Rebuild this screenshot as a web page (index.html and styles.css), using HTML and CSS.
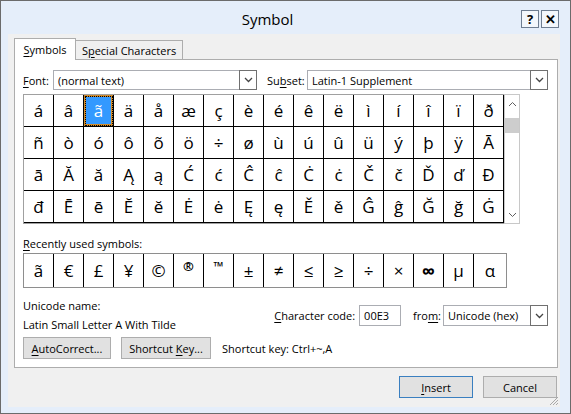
FILE: index.html
```html
<!DOCTYPE html>
<html lang="en">
<head>
    <meta charset="UTF-8">
    <meta name="viewport" content="width=device-width, initial-scale=1.0">
    <title>Symbol</title>
    <link rel="stylesheet" href="styles.css">
</head>
<body>
    <div class="window">
        <div class="titlebar">
            <div class="title">Symbol</div>
            <div class="caption-btns">
                <span class="cap-btn">?</span>
                <span class="cap-btn">&#x2715;</span>
            </div>
        </div>

        <div class="client">
            <!-- Tabs -->
            <div class="tabs">
                <div class="tab active"><u>S</u>ymbols</div>
                <div class="tab special">S<u>p</u>ecial Characters</div>
            </div>

            <div class="panel">
                <div class="font-row">
                    <span class="font-label"><u>F</u>ont:</span>
                    <div class="combo font-combo">
                        <span>(normal text)</span>
                        <span class="drop"><svg width="9" height="6" viewBox="0 0 9 6"><path d="M1 1 L4.5 4.5 L8 1" fill="none" stroke="#444" stroke-width="1.3"/></svg></span>
                    </div>
                    <span class="subset-label">Su<u>b</u>set:</span>
                    <div class="combo subset-combo">
                        <span>Latin-1 Supplement</span>
                        <span class="drop"><svg width="9" height="6" viewBox="0 0 9 6"><path d="M1 1 L4.5 4.5 L8 1" fill="none" stroke="#444" stroke-width="1.3"/></svg></span>
                    </div>
                </div>

                <!-- Character map -->
                <div class="charmap">
                    <div class="grid">
                        <span class="cell">á</span><span class="cell">â</span><span class="cell sel">ã</span><span class="cell">ä</span>
                        <span class="cell">å</span><span class="cell">æ</span><span class="cell">ç</span><span class="cell">è</span>
                        <span class="cell">é</span><span class="cell">ê</span><span class="cell">ë</span><span class="cell">ì</span>
                        <span class="cell">í</span><span class="cell">î</span><span class="cell">ï</span><span class="cell">ð</span>

                        <span class="cell">ñ</span><span class="cell">ò</span><span class="cell">ó</span><span class="cell">ô</span>
                        <span class="cell">õ</span><span class="cell">ö</span><span class="cell">÷</span><span class="cell">ø</span>
                        <span class="cell">ù</span><span class="cell">ú</span><span class="cell">û</span><span class="cell">ü</span>
                        <span class="cell">ý</span><span class="cell">þ</span><span class="cell">ÿ</span><span class="cell">Ā</span>

                        <span class="cell">ā</span><span class="cell">Ă</span><span class="cell">ă</span><span class="cell">Ą</span>
                        <span class="cell">ą</span><span class="cell">Ć</span><span class="cell">ć</span><span class="cell">Ĉ</span>
                        <span class="cell">ĉ</span><span class="cell">Ċ</span><span class="cell">ċ</span><span class="cell">Č</span>
                        <span class="cell">č</span><span class="cell">Ď</span><span class="cell">ď</span><span class="cell">Đ</span>

                        <span class="cell">đ</span><span class="cell">Ē</span><span class="cell">ē</span><span class="cell">Ĕ</span>
                        <span class="cell">ĕ</span><span class="cell">Ė</span><span class="cell">ė</span><span class="cell">Ę</span>
                        <span class="cell">ę</span><span class="cell">Ě</span><span class="cell">ě</span><span class="cell">Ĝ</span>
                        <span class="cell">ĝ</span><span class="cell">Ğ</span><span class="cell">ğ</span><span class="cell">Ġ</span>
                    </div>
                    <div class="vscroll">
                        <span class="sb-arrow"><svg width="9" height="6" viewBox="0 0 9 6"><path d="M1 5 L4.5 1.5 L8 5" fill="none" stroke="#606060" stroke-width="1"/></svg></span>
                        <span class="thumb"></span>
                        <span class="track"></span>
                        <span class="sb-arrow"><svg width="9" height="6" viewBox="0 0 9 6"><path d="M1 1 L4.5 4.5 L8 1" fill="none" stroke="#606060" stroke-width="1"/></svg></span>
                    </div>
                </div>

                <div class="recent-label"><u>R</u>ecently used symbols:</div>
                <div class="recent">
                    <span class="rcell">ã</span><span class="rcell">€</span><span class="rcell">£</span><span class="rcell">¥</span>
                    <span class="rcell">©</span><span class="rcell small">®</span><span class="rcell small">™</span><span class="rcell">±</span>
                    <span class="rcell">≠</span><span class="rcell">≤</span><span class="rcell">≥</span><span class="rcell">÷</span>
                    <span class="rcell">×</span><span class="rcell inf">∞</span><span class="rcell">µ</span><span class="rcell">α</span>
                </div>

                <div class="info-row">
                    <div class="name-col">
                        <div>Unicode name:</div>
                        <div>Latin Small Letter A With Tilde</div>
                    </div>
                    <div class="code-group">
                        <span><u>C</u>haracter code:</span>
                        <div class="textbox">00E3</div>
                        <span class="from-label">fro<u>m</u>:</span>
                        <div class="combo from-combo">
                            <span>Unicode (hex)</span>
                            <span class="drop"><svg width="9" height="6" viewBox="0 0 9 6"><path d="M1 1 L4.5 4.5 L8 1" fill="none" stroke="#444" stroke-width="1.3"/></svg></span>
                        </div>
                    </div>
                </div>

                <div class="btn-row">
                    <button class="btn autocorrect"><u>A</u>utoCorrect...</button>
                    <button class="btn shortcut">Shortcut <u>K</u>ey...</button>
                    <span class="shortcut-text">Shortcut key: Ctrl+~,A</span>
                </div>
            </div>

            <div class="dialog-btns">
                <button class="btn default"><u>I</u>nsert</button>
                <button class="btn">Cancel</button>
            </div>

            <svg class="grip" width="10" height="10" viewBox="0 0 10 10">
                <path d="M9 1 L1 9 M9 4 L4 9 M9 7 L7 9" stroke="#a8a8a8" stroke-width="1"/>
            </svg>
        </div>
    </div>
</body>
</html>
```

FILE: styles.css
```css
body {
    margin: 0;
    font-family: "Open Sans", "Noto Sans", sans-serif;
    font-size: 11px;
    color: #000;
    background: #fff;
}
u {
    text-decoration-thickness: 1px;
    text-underline-offset: 2px;
}
.window {
    width: 571px;
    height: 414px;
    box-sizing: border-box;
    border: 1px solid #6b6b6b;
    background: #e5eefa;
    display: flex;
    flex-direction: column;
}
.titlebar {
    height: 33px;
    display: flex;
    align-items: center;
    padding-right: 11px;
}
.title {
    flex: 1;
    text-align: center;
    font-size: 15px;
    padding-left: 13px;
    margin-top: 2px;
}
.caption-btns {
    display: flex;
    gap: 2px;
    margin-top: 3px;
}
.cap-btn {
    width: 18px;
    height: 18px;
    box-sizing: border-box;
    border: 1px solid #6e7d91;
    background: #f3f7fc;
    font-weight: bold;
    font-size: 13px;
    display: flex;
    align-items: center;
    justify-content: center;
    line-height: 1;
}
.client {
    flex: 1;
    margin: 0 10px 6px 7px;
    padding: 4px 2px 9px 6px;
    background: #f0f0f0;
    position: relative;
    display: flex;
    flex-direction: column;
}

/* tabs */
.tabs {
    display: flex;
    align-items: flex-end;
    height: 22px;
    margin-bottom: -1px;
    position: relative;
    z-index: 1;
}
.tab {
    height: 19px;
    box-sizing: border-box;
    border: 1px solid #adadad;
    border-bottom: none;
    background: #f0f0f0;
    display: flex;
    align-items: center;
    justify-content: center;
    margin-bottom: 1px;
}
.tab.active {
    width: 62px;
    height: 22px;
    margin-bottom: 0;
    background: #fff;
    position: relative;
    z-index: 1;
}
.tab.special {
    width: 108px;
    margin-left: -1px;
}
.panel {
    height: 309px;
    box-sizing: border-box;
    border: 1px solid #adadad;
    background: #fff;
    padding: 10px 9px 0 8px;
}

/* font / subset row */
.font-row {
    display: flex;
    align-items: center;
    height: 20px;
}
.font-label {
    width: 30px;
}
.subset-label {
    width: 40px;
    padding-left: 10px;
}
.combo {
    height: 20px;
    box-sizing: border-box;
    border: 1px solid #abadb3;
    background: #fff;
    display: flex;
    align-items: center;
    padding-left: 4px;
}
.font-combo {
    width: 204px;
}
.subset-combo {
    flex: 1;
}
.drop {
    margin-left: auto;
    margin-right: -1px;
    width: 18px;
    height: 20px;
    flex: none;
    box-sizing: border-box;
    border: 1px solid #707070;
    background: #fff;
    display: flex;
    align-items: center;
    justify-content: center;
}

/* character grid */
.charmap {
    display: flex;
    margin-top: 4px;
}
.grid {
    display: grid;
    grid-template-columns: repeat(16, 30px);
    grid-auto-rows: 32px;
    border: 1px solid #a0a0a0;
    border-right: none;
}
.cell {
    box-sizing: border-box;
    border-right: 1px solid #000;
    border-bottom: 1px solid #000;
    display: flex;
    align-items: center;
    justify-content: center;
    font-size: 17px;
}
.cell.sel {
    background: #3399ff;
    color: #fff;
    outline: 1px dotted #000;
    outline-offset: -2px;
    box-shadow: inset 0 0 0 2px #d08a2a;
}
.vscroll {
    width: 16px;
    box-sizing: border-box;
    border: 1px solid #c8c8c8;
    background: #fff;
    display: flex;
    flex-direction: column;
}
.sb-arrow {
    height: 17px;
    display: flex;
    align-items: center;
    justify-content: center;
}
.thumb {
    height: 15px;
    margin-top: 6px;
    background: #cdcdcd;
}
.track {
    flex: 1;
}

/* recently used */
.recent-label {
    margin-top: 12px;
    line-height: 16px;
}
.recent {
    display: flex;
    width: fit-content;
    height: 35px;
    box-sizing: border-box;
    border: 1px solid #8e8e8e;
    margin-top: 1px;
}
.rcell {
    width: 30px;
    box-sizing: border-box;
    border-right: 1px solid #000;
    display: flex;
    align-items: center;
    justify-content: center;
    font-size: 17px;
}
.rcell:last-child {
    width: 32px;
    border-right: none;
}
.rcell.small {
    font-size: 13px;
    font-weight: bold;
    padding-bottom: 9px;
}
.rcell.inf {
    font-weight: bold;
    font-size: 19px;
}

/* bottom info */
.info-row {
    display: flex;
    align-items: flex-start;
    margin-top: 8px;
}
.name-col {
    line-height: 19px;
}
.code-group {
    margin-left: auto;
    margin-top: 9px;
    display: flex;
    align-items: center;
    height: 21px;
}
.textbox {
    width: 42px;
    height: 21px;
    box-sizing: border-box;
    border: 1px solid #abadb3;
    margin-left: 4px;
    padding-left: 4px;
    display: flex;
    align-items: center;
}
.from-label {
    margin-left: 12px;
}
.from-combo {
    width: 105px;
    height: 21px;
    margin-left: 2px;
}
.from-combo .drop {
    height: 21px;
}
.btn-row {
    display: flex;
    align-items: center;
    margin-top: 3px;
}
.btn {
    height: 22px;
    box-sizing: border-box;
    border: 1px solid #adadad;
    background: #e1e1e1;
    font: inherit;
    color: #000;
    padding: 0;
}
.autocorrect {
    width: 88px;
}
.shortcut {
    width: 90px;
    margin-left: 10px;
}
.shortcut-text {
    margin-left: 11px;
}
.dialog-btns {
    display: flex;
    justify-content: flex-end;
    gap: 10px;
    margin-top: 8px;
    padding-right: 1px;
}
.dialog-btns .btn {
    width: 74px;
}
.btn.default {
    border-color: #3a7fc0;
}
.grip {
    position: absolute;
    right: 1px;
    bottom: 1px;
}
```
